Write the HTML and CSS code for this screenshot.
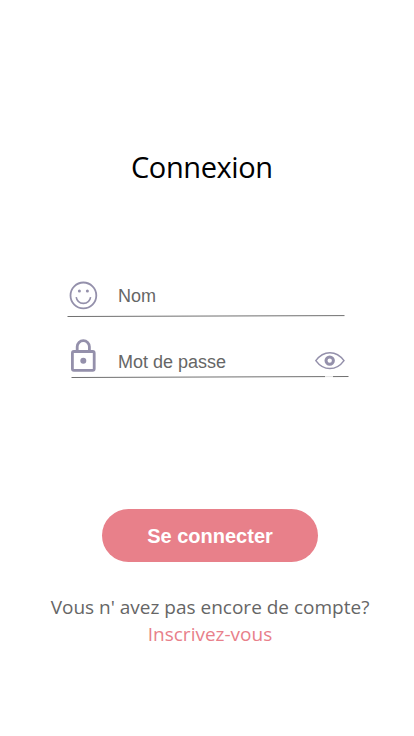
FILE: index.html
```html
<!DOCTYPE html>
<html lang="fr">
<head>
<meta charset="utf-8">
<title>Connexion</title>
<link rel="stylesheet" href="styles.css">
</head>
<body>
<main class="login">
  <h1 class="title">Connexion</h1>
  <form class="form">
    <label class="field field-name">
      <svg class="icon smile" width="29" height="29" viewBox="0 0 29 29" fill="none" stroke="#9490ab" stroke-width="1.8"><circle cx="14.4" cy="14.4" r="12.9"/><path d="M7.2 16.2C8.6 24.4 20.2 24.4 21.6 16.2" stroke-width="1.6"/><circle cx="10.4" cy="10" r="1.5" fill="#9490ab" stroke="none"/><circle cx="18.4" cy="10" r="1.5" fill="#9490ab" stroke="none"/></svg>
      <span class="label">Nom</span>
      <svg class="rule" width="278" height="3" viewBox="0 0 278 3"><path d="M.5 1.5L277.5.6" stroke="#707070"/></svg>
    </label>
    <label class="field field-password">
      <svg class="icon lock" width="26" height="34" viewBox="0 0 26 34" fill="none" stroke="#9490ab" stroke-width="2.8"><rect x="1.4" y="12.5" width="21.8" height="18.8" rx="1.5"/><path d="M6.2 12V7.8a6.1 6.1 0 0 1 12.2 0V12"/><circle cx="12.3" cy="21.8" r="3" fill="#9490ab" stroke="none"/></svg>
      <span class="label">Mot de passe</span>
      <svg class="eye" width="30" height="20" viewBox="0 0 30 20" fill="none" stroke="#9490ab" stroke-width="1.5"><path d="M.8 9.6C8.5-1 21.3-1 29 9.6C21.3 20.200 8.500 20.200.8 9.600Z"/><circle cx="14.700" cy="9.600" r="3.700" stroke-width="3"/></svg>
      <svg class="rule" width="278" height="3" viewBox="0 0 278 3"><path d="M.5 1.5L254 .6M262 .6L277.5.5" stroke="#707070"/><path d="M254 .6H262" stroke="#e4e4e4"/></svg>
    </label>
    <button class="submit" type="button">Se connecter</button>
  </form>
  <p class="signup">Vous n' avez pas encore de compte?<a class="link">Inscrivez-vous</a></p>
</main>
</body>
</html>
```
FILE: styles.css
```css
* { box-sizing: border-box; }
body { margin: 0; background: #fff; }
.login { width: 414px; height: 736px; padding-top: 145px; overflow: hidden; font-family: "Open Sans", "Noto Sans", sans-serif; }
.title { margin: 0 0 0 131px; font-size: 29px; line-height: 44px; font-weight: 400; letter-spacing: -0.4px; color: #000; }
.form { margin: 0; }
.field { position: relative; display: flex; color: #666; font: 18px/24px "Liberation Sans", sans-serif; }
.field-name { margin: 92px 0 0 67px; width: 278px; height: 37px; }
.field-password { margin: 20px 0 0 71px; width: 278px; height: 41px; }
.smile { margin-left: 2px; }
.lock { margin-top: 1px; }
.field-name .label { margin: 3px 0 0 20px; }
.field-password .label { margin: 12px 0 0 21px; }
.eye { margin: 13px 4px 0 auto; }
.rule { position: absolute; left: 0; bottom: 0; }
.submit { display: block; width: 216px; height: 53px; margin: 130px 0 0 102px; padding: 2px 0 0; border: 0; border-radius: 27px; background: #e8808a; color: #fff; font: bold 20px/51px "Liberation Sans", sans-serif; }
.signup { width: 330px; margin: 32px 0 0 45px; text-align: center; font-size: 19px; line-height: 27px; color: #666; white-space: nowrap; }
.link { display: block; color: #e8808a; }
```
